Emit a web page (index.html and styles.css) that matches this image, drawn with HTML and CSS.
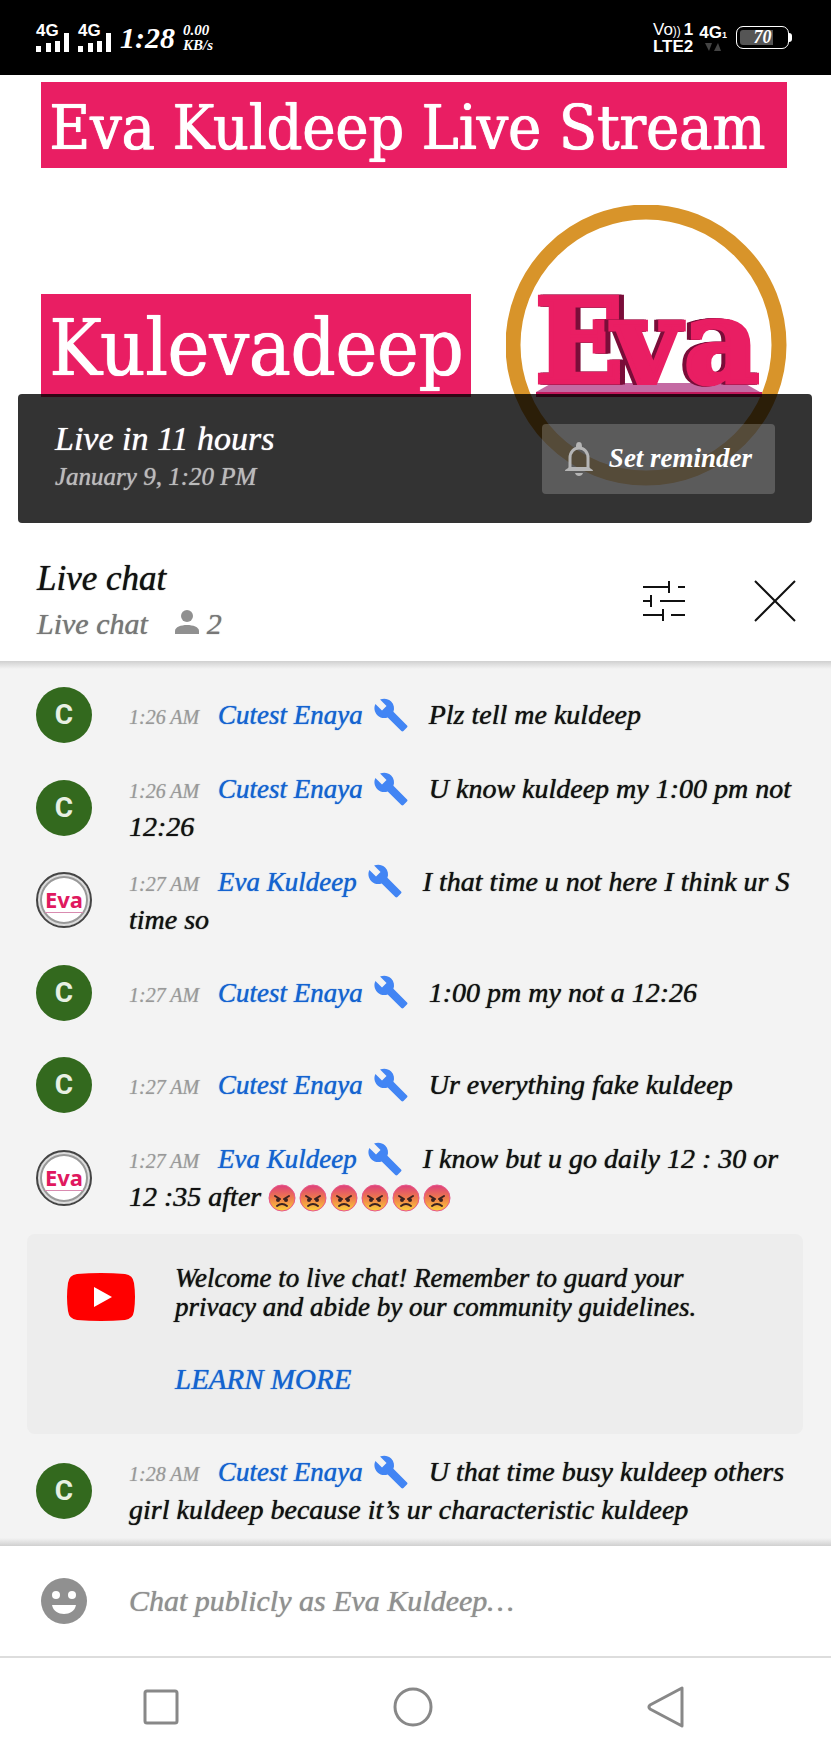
FILE: index.html
```
<!DOCTYPE html>
<html lang="en">
<head>
  <meta charset="UTF-8">
  <meta name="viewport" content="width=device-width, initial-scale=1.0">
  <title>Eva Kuldeep Live Stream</title>
  <link rel="stylesheet" href="styles.css">
</head>
<body>
  <!-- Shared icons -->
  <svg class="icon-defs" aria-hidden="true">
    <symbol id="wrench" viewBox="0 0 24 24">
      <path fill="#4285f4" d="M22.7 19l-9.1-9.1c.9-2.3.4-5-1.5-6.9-2-2-5-2.4-7.4-1.3L9 6 6 9 1.6 4.7C.4 7.1.9 10.1 2.9 12.1c1.9 1.9 4.6 2.4 6.9 1.5l9.1 9.1c.4.4 1 .4 1.4 0l2.3-2.3c.5-.4.5-1.1.1-1.4z"/>
    </symbol>
    <symbol id="angry" viewBox="0 0 28 28">
      <circle cx="14" cy="14" r="13" fill="url(#angry-fill)" stroke="#e8588a"/>
      <path d="M7 12l5 3M21 12l-5 3" stroke="#3b2220" stroke-width="2" stroke-linecap="round"/>
      <circle cx="10" cy="16" r="2" fill="#3b2220"/>
      <circle cx="18" cy="16" r="2" fill="#3b2220"/>
      <path d="M9 22q5-4 10 0" fill="none" stroke="#3b2220" stroke-width="2" stroke-linecap="round"/>
    </symbol>
    <symbol id="bars" viewBox="0 0 34 19">
      <path fill="#fff" d="M0 13h5v6H0zM10 10h5v9h-5zM19 8h5v11h-5zM28 0h5v19h-5z"/>
    </symbol>
    <defs>
      <linearGradient id="angry-fill" x1="0" y1="0" x2="0" y2="1">
        <stop offset="0" stop-color="#dc3f7c"/>
        <stop offset="0.5" stop-color="#ef7a4c"/>
        <stop offset="1" stop-color="#fbd13a"/>
      </linearGradient>
    </defs>
  </svg>

  <div class="status-bar">
    <div class="status-left">
      <span class="signal">4G<svg><use href="#bars"/></svg></span>
      <span class="signal">4G<svg><use href="#bars"/></svg></span>
      <span class="clock">1:28</span>
      <span class="speed">0.00<br>KB/s</span>
    </div>
    <div class="status-right">
      <span class="volte">
        <span class="volte-line"><span class="vo">Vo<small>))</small></span>1</span>
        <span class="volte-line">LTE2</span>
      </span>
      <span class="network">
        <span>4G<small>1</small></span>
        <svg width="16" height="8" viewBox="0 0 16 8"><path fill="#444" d="M0 0h7L4 8zM9 8h7l-3-8z"/></svg>
      </span>
      <span class="battery">70</span>
    </div>
  </div>

  <section class="hero">
    <h1 class="banner">Eva Kuldeep Live Stream</h1>
    <div class="hero-row">
      <p class="banner banner-tall">Kulevadeep</p>
      <svg class="logo" viewBox="0 0 281 281" role="img" aria-label="Eva">
        <circle cx="140" cy="140" r="133" fill="#fff" stroke="#d8942a" stroke-width="15"/>
        <path d="M46 178h192l16 9H30z" fill="#c46aa3"/>
        <path d="M30 187h226v5H30z" fill="#c2185b"/>
        <g class="logo-right">
          <text x="29" y="177">E</text>
        </g>
        <g class="logo-left">
          <text x="107" y="177">v</text>
          <text x="178" y="177">a</text>
        </g>
      </svg>
    </div>
    <div class="reminder-card">
      <div>
        <p class="reminder-title">Live in 11 hours</p>
        <p class="reminder-date">January 9, 1:20 PM</p>
      </div>
      <button class="reminder-button" type="button">
        <svg width="28" height="34" viewBox="0 0 28 34" aria-hidden="true">
          <path d="M5 27V16c0-6 4-10 9-10s9 4 9 10v11" fill="none" stroke="#b5b5b5" stroke-width="3"/>
          <path d="M0 29c0-2 3-2 4-4h20c1 2 4 2 4 4zM11 6c0-3 0-6 3-6s3 3 3 6zM10 31h8c-1 4-7 4-8 0z" fill="#b5b5b5"/>
        </svg>
        Set reminder
      </button>
    </div>
  </section>

  <header class="chat-header">
    <div class="chat-titles">
      <h2>Live chat</h2>
      <p>Live chat
        <svg width="24" height="24" viewBox="0 0 24 24" aria-hidden="true"><circle cx="12" cy="6" r="6" fill="#909090"/><path d="M0 24v-3c0-4 6-6 12-6s12 2 12 6v3z" fill="#909090"/></svg>
        2</p>
    </div>
    <button class="icon-button" type="button" aria-label="Chat settings">
      <svg width="42" height="40" viewBox="0 0 42 40"><path d="M0 6h26M26 0v12M35 6h7M0 20h8M8 14v12M17 20h25M0 34h20M20 28v12M28 34h14" stroke="#111" stroke-width="2" fill="none"/></svg>
    </button>
    <button class="icon-button" type="button" aria-label="Close chat">
      <svg width="42" height="42" viewBox="0 0 42 42"><path d="M1 1l40 40M41 1L1 41" stroke="#111" stroke-width="2" fill="none"/></svg>
    </button>
  </header>

  <main class="chat">
    <div class="message">
      <span class="avatar">C</span>
      <p><time>1:26 AM</time><a href="#">Cutest Enaya</a><svg class="wrench"><use href="#wrench"/></svg>Plz tell me kuldeep</p>
    </div>
    <div class="message">
      <span class="avatar">C</span>
      <p><time>1:26 AM</time><a href="#">Cutest Enaya</a><svg class="wrench"><use href="#wrench"/></svg>U know kuldeep my 1:00 pm not 12:26</p>
    </div>
    <div class="message">
      <span class="avatar avatar-eva">Eva</span>
      <p><time>1:27 AM</time><a href="#">Eva Kuldeep</a><svg class="wrench"><use href="#wrench"/></svg>I that time u not here I think ur S time so</p>
    </div>
    <div class="message">
      <span class="avatar">C</span>
      <p><time>1:27 AM</time><a href="#">Cutest Enaya</a><svg class="wrench"><use href="#wrench"/></svg>1:00 pm my not a 12:26</p>
    </div>
    <div class="message">
      <span class="avatar">C</span>
      <p><time>1:27 AM</time><a href="#">Cutest Enaya</a><svg class="wrench"><use href="#wrench"/></svg>Ur everything fake kuldeep</p>
    </div>
    <div class="message">
      <span class="avatar avatar-eva">Eva</span>
      <p><time>1:27 AM</time><a href="#">Eva Kuldeep</a><svg class="wrench"><use href="#wrench"/></svg>I know but u go daily 12 : 30 or 12 :35 after <svg class="emoji"><use href="#angry"/></svg><svg class="emoji"><use href="#angry"/></svg><svg class="emoji"><use href="#angry"/></svg><svg class="emoji"><use href="#angry"/></svg><svg class="emoji"><use href="#angry"/></svg><svg class="emoji"><use href="#angry"/></svg></p>
    </div>

    <div class="welcome">
      <svg width="68" height="48" viewBox="0 0 68 48" aria-hidden="true">
        <path d="M10 1Q34-1 58 1q8 1 9 9 2 14 0 28-1 8-9 9-24 2-48 0-8-1-9-9-2-14 0-28 1-8 9-9z" fill="#f00"/>
        <path d="M27 14v20l18-10z" fill="#fff"/>
      </svg>
      <div>
        <p>Welcome to live chat! Remember to guard your privacy and abide by our community guidelines.</p>
        <a href="#">LEARN MORE</a>
      </div>
    </div>

    <div class="message">
      <span class="avatar">C</span>
      <p><time>1:28 AM</time><a href="#">Cutest Enaya</a><svg class="wrench"><use href="#wrench"/></svg>U that time busy kuldeep others girl kuldeep because it’s ur characteristic kuldeep</p>
    </div>
  </main>

  <form class="composer">
    <button class="icon-button" type="button" aria-label="Emoji">
      <svg width="46" height="46" viewBox="0 0 46 46">
        <circle cx="23" cy="23" r="23" fill="#909090"/>
        <circle cx="15" cy="17" r="4" fill="#fff"/>
        <circle cx="31" cy="17" r="4" fill="#fff"/>
        <path d="M11 27h24c-2 12-22 12-24 0z" fill="#fff"/>
      </svg>
    </button>
    <input type="text" aria-label="Chat message" placeholder="Chat publicly as Eva Kuldeep…">
  </form>

  <nav class="system-nav">
    <button class="icon-button" type="button" aria-label="Recent apps">
      <svg width="36" height="36" viewBox="0 0 36 36"><rect x="2" y="2" width="32" height="32" rx="2" fill="none" stroke="#888" stroke-width="3"/></svg>
    </button>
    <button class="icon-button" type="button" aria-label="Home">
      <svg width="40" height="40" viewBox="0 0 40 40"><circle cx="20" cy="20" r="18" fill="none" stroke="#888" stroke-width="3"/></svg>
    </button>
    <button class="icon-button" type="button" aria-label="Back">
      <svg width="38" height="42" viewBox="0 0 38 42"><path d="M35 2v38L3 23q-2-2 0-4z" fill="none" stroke="#888" stroke-width="3" stroke-linejoin="round"/></svg>
    </button>
  </nav>
</body>
</html>
```

FILE: styles.css
```
* {
  box-sizing: border-box;
}
body {
  display: flex;
  flex-direction: column;
  min-height: 100vh;
  margin: 0;
  background-color: #fff;
  color: #111;
  font-family: "Liberation Serif", serif;
  font-style: italic;
  font-size: 27px;
}
h1, h2, p {
  margin: 0;
  font-weight: normal;
}
a {
  color: #1463d0;
  text-decoration: none;
}
button, input {
  font: inherit;
}
.icon-defs {
  position: absolute;
  width: 0;
  height: 0;
}
.icon-button {
  display: flex;
  padding: 0;
  border: none;
  background: none;
  cursor: pointer;
}

/* Status bar */
.status-bar {
  display: flex;
  justify-content: space-between;
  height: 75px;
  padding: 0 38px 0 36px;
  background-color: #000;
  color: #fff;
}
.status-left, .status-right {
  display: flex;
  align-items: center;
}
.signal {
  position: relative;
  width: 34px;
  height: 28px;
  margin-right: 8px;
  font: bold 17px/14px "Liberation Sans", sans-serif;
}
.signal svg {
  position: absolute;
  bottom: 0;
  left: 0;
  width: 34px;
  height: 19px;
}
.clock {
  font-size: 30px;
  font-weight: bold;
}
.speed {
  margin-left: 8px;
  font-size: 15px;
  font-weight: bold;
  line-height: 15px;
}
.volte, .network {
  display: flex;
  flex-direction: column;
  font-family: "Liberation Sans", sans-serif;
  font-style: normal;
  font-weight: bold;
  font-size: 17px;
  line-height: 15px;
}
.volte-line {
  display: flex;
  justify-content: space-between;
}
.vo {
  font-weight: normal;
}
.volte-line small {
  font-size: 12px;
}
.network {
  align-items: center;
  margin: 0 9px 0 6px;
}
.network small {
  font-size: 9px;
}
.battery {
  position: relative;
  width: 53px;
  height: 23px;
  margin-right: 4px;
  border: 1px solid #fff;
  border-radius: 7px;
  background: linear-gradient(to right, #555 70%, #000 70%);
  box-shadow: inset 0 0 0 3px #000;
  font-size: 18px;
  font-weight: bold;
  line-height: 21px;
  text-align: center;
}
.battery::after {
  content: "";
  position: absolute;
  top: 6px;
  right: -4px;
  width: 3px;
  height: 9px;
  border-radius: 0 3px 3px 0;
  background-color: #fff;
}

/* Stream preview */
.hero {
  position: relative;
  padding: 7px 44px 37px 41px;
}
.banner {
  padding: 6px 8px 0;
  background-color: #e91e63;
  color: #fff;
  font-family: "DejaVu Serif Condensed", "DejaVu Serif", serif;
  font-style: normal;
  font-size: 62px;
  line-height: 80px;
  text-shadow: 0 0 1px #fff, 1px 0 0 #fff;
  white-space: nowrap;
}
.banner-tall {
  font-size: 78px;
  line-height: 97px;
}
.hero-row {
  display: flex;
  align-items: center;
  justify-content: space-between;
  margin-top: 37px;
}
.logo {
  flex: none;
  width: 281px;
  height: 281px;
}
.logo text {
  fill: #e91e63;
  stroke: #e91e63;
  stroke-width: 5px;
  font: bold 116px "DejaVu Serif", serif;
}
.logo-right {
  filter: drop-shadow(2px 0 0 #7a0d39) drop-shadow(3px 0 0 #7a0d39);
}
.logo-left {
  filter: drop-shadow(-2px 0 0 #7a0d39) drop-shadow(-2px 0 0 #7a0d39);
}
.reminder-card {
  position: absolute;
  right: 19px;
  bottom: 0;
  left: 18px;
  display: flex;
  align-items: center;
  justify-content: space-between;
  height: 129px;
  padding: 0 37px;
  border-radius: 4px;
  background-color: rgba(0, 0, 0, 0.8);
}
.reminder-title {
  color: #fff;
  font-size: 34px;
  line-height: 40px;
  text-shadow: 0 0 1px #fff;
}
.reminder-date {
  margin-bottom: 4px;
  color: #bbb;
  font-size: 25px;
  line-height: 36px;
  text-shadow: 0 0 1px #bbb;
}
.reminder-button {
  display: flex;
  align-items: center;
  justify-content: center;
  gap: 16px;
  width: 233px;
  height: 70px;
  border: none;
  border-radius: 4px;
  background-color: rgba(255, 255, 255, 0.2);
  color: #fff;
  font-size: 27px;
  font-weight: bold;
}

/* Live chat */
.chat-header {
  display: flex;
  align-items: center;
  gap: 69px;
  height: 138px;
  padding: 18px 35px 0 37px;
}
.chat-titles {
  flex-grow: 1;
}
.chat-titles h2 {
  font-size: 35px;
  line-height: 45px;
  text-shadow: 0 0 1px #111;
}
.chat-titles p {
  color: #777;
  font-size: 30px;
  line-height: 45px;
  text-shadow: 0 0 1px #777;
}
.chat-titles svg {
  margin-left: 20px;
}
.chat {
  flex-grow: 1;
  padding: 8px 0;
  background: linear-gradient(#d0d0d0, #f3f3f3 8px, #f3f3f3 calc(100% - 8px), #d0d0d0);
}
.message {
  display: flex;
  align-items: center;
  gap: 37px;
  min-height: 92px;
  padding: 0 36px;
}
.message:nth-child(even) {
  min-height: 93px;
}
.message p {
  font-size: 28px;
  line-height: 37px;
  text-shadow: 0 0 1px #111;
}
.message time {
  display: inline-block;
  width: 89px;
  color: #999;
  font-size: 20px;
  line-height: 24px;
  text-shadow: 0 0 1px #bbb;
}
.message a {
  font-size: 27px;
  text-shadow: 0 0 1px #1463d0;
}
.avatar {
  flex: none;
  width: 56px;
  height: 56px;
  border-radius: 50%;
  background-color: #33691e;
  color: #e8f0e4;
  font: bold 28px/56px Roboto, sans-serif;
  text-align: center;
}
.avatar-eva {
  border: 2px solid #444;
  background-color: #fff;
  box-shadow: inset 0 0 0 2px #ddd, inset 0 0 0 4px #999;
  color: #e0195f;
  font: bold 22px/50px "Noto Sans", sans-serif;
  text-decoration: underline 1px #d98bb0;
  text-underline-offset: 4px;
}
.wrench {
  width: 36px;
  height: 36px;
  margin: -8px 20px -2px 10px;
  vertical-align: middle;
}
.emoji {
  width: 28px;
  height: 28px;
  margin: -4px 3px 0 0;
  vertical-align: middle;
}
.welcome {
  display: flex;
  align-items: flex-start;
  gap: 40px;
  min-height: 200px;
  margin: 10px 28px 10px 27px;
  padding: 30px 90px 30px 40px;
  border-radius: 8px;
  background-color: #ededed;
  line-height: 29px;
  text-shadow: 0 0 1px #111;
}
.welcome svg {
  flex: none;
  margin-top: 9px;
}
.welcome a {
  display: inline-block;
  margin-top: 43px;
  font-size: 29px;
  text-shadow: 0 0 1px #1463d0;
}

/* Message box */
.composer {
  display: flex;
  align-items: center;
  gap: 42px;
  height: 112px;
  padding: 0 41px;
  border-bottom: 2px solid #ddd;
}
.composer input {
  flex-grow: 1;
  padding: 0;
  border: none;
  outline: none;
  font-size: 30px;
}
.composer input::placeholder {
  color: #909090;
  opacity: 1;
  text-shadow: 0 0 1px #909090;
}
.system-nav {
  display: flex;
  align-items: center;
  justify-content: space-between;
  height: 97px;
  padding: 0 146px 0 143px;
}
```
